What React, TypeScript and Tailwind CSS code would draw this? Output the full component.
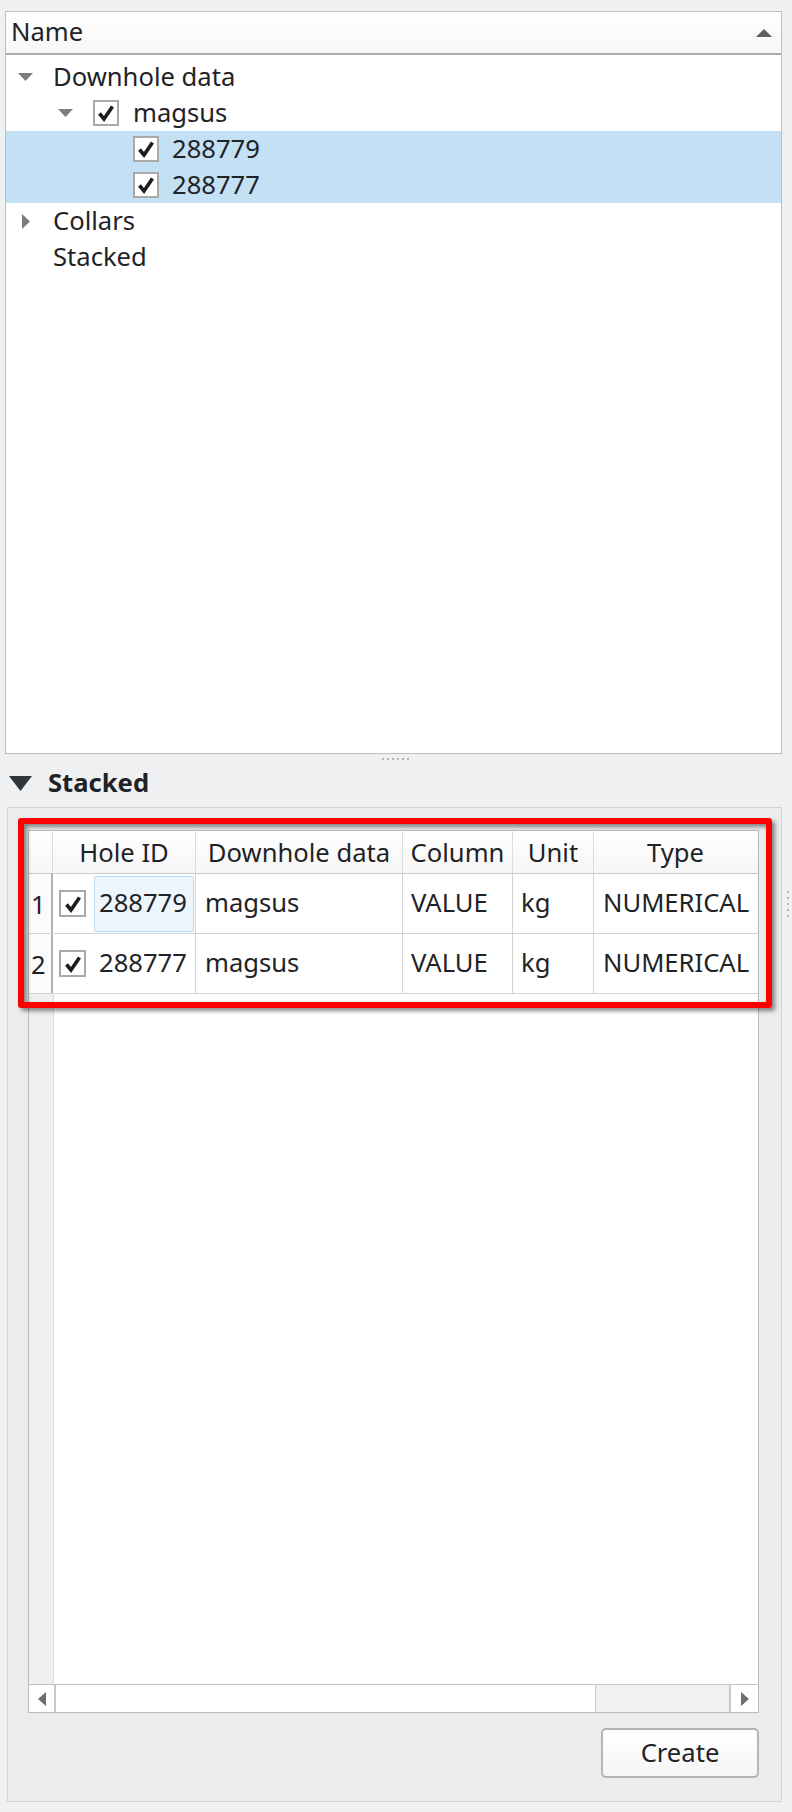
import React from "react";

const font = { fontFamily: '"Noto Sans", "Open Sans", sans-serif' };

function Check({ size = 26 }: { size?: number }) {
    return (
        <div className="flex items-center justify-center border-2 border-[#a9a9a9] bg-white shrink-0" style={{ width: size, height: size }}>
            <svg width="18" height="18" viewBox="0 0 18 18">
                <path d="M2.5 9.5 L7 15 L15.5 2.5" fill="none" stroke="#1b1e20" strokeWidth="3.6" strokeLinejoin="miter" />
            </svg>
        </div>
    );
}

function DownArrow({ color = "#7b7d7f", w = 15, h = 8 }: { color?: string; w?: number; h?: number }) {
    return (
        <svg width={w} height={h} viewBox={`0 0 ${w} ${h}`} className="shrink-0">
            <polygon points={`0,0 ${w},0 ${w / 2},${h}`} fill={color} />
        </svg>
    );
}

function RightArrow() {
    return (
        <svg width="8" height="15" viewBox="0 0 8 15" className="shrink-0">
            <polygon points="0,0 8,7.5 0,15" fill="#7b7d7f" />
        </svg>
    );
}

const cols = "grid grid-cols-[24px_143px_207px_110px_81px_163px]";

const rows = [
    { n: "1", id: "288779", focus: true },
    { n: "2", id: "288777", focus: false },
];

export default function App() {
    return (
        <div className="w-[792px] h-[1812px] bg-[#eff0f1] text-[#1f2326] text-[25.6px] flex flex-col" style={font}>
            {/* tree view */}
            <div className="mt-[11px] ml-[5px] w-[777px] h-[743px] border border-[#bcbebf] bg-white flex flex-col">
                <div className="h-[43px] shrink-0 flex items-center justify-between pl-[5px] pr-[9px] border-b-2 border-[#a9aaab] bg-gradient-to-b from-white to-[#f7f7f7]">
                    <span>Name</span>
                    <svg width="16" height="8" viewBox="0 0 16 8">
                        <polygon points="0,8 16,8 8,0" fill="#5d5f61" />
                    </svg>
                </div>
                <div className="pt-[4px] flex flex-col">
                    <div className="h-[36px] flex items-center">
                        <div className="ml-[12px]"><DownArrow /></div>
                        <span className="ml-[20px]">Downhole data</span>
                    </div>
                    <div className="h-[36px] flex items-center">
                        <div className="ml-[52px]"><DownArrow /></div>
                        <div className="ml-[20px]"><Check /></div>
                        <span className="ml-[14px]">magsus</span>
                    </div>
                    {["288779", "288777"].map((id) => (
                        <div key={id} className="h-[36px] flex items-center bg-[#c4e0f4]">
                            <div className="ml-[127px]"><Check /></div>
                            <span className="ml-[13px]">{id}</span>
                        </div>
                    ))}
                    <div className="h-[36px] flex items-center">
                        <div className="ml-[16px]"><RightArrow /></div>
                        <span className="ml-[23px]">Collars</span>
                    </div>
                    <div className="h-[36px] flex items-center">
                        <span className="ml-[47px]">Stacked</span>
                    </div>
                </div>
            </div>

            {/* splitter handle */}
            <div className="h-[9px] flex items-center justify-center gap-[3px] pr-[2px]">
                {[0, 1, 2, 3, 4, 5].map((i) => (
                    <div key={i} className="w-[2px] h-[2px] bg-[#b4b6b8]" />
                ))}
            </div>

            {/* section header */}
            <div className="h-[40px] flex items-center">
                <div className="ml-[9px]"><DownArrow color="#31363b" w={23} h={15} /></div>
                <span className="ml-[16px] font-bold">Stacked</span>
            </div>

            <div className="mt-[4px] flex">
                <div className="ml-[7px] w-[775px] h-[995px] border border-[#d3d4d5] bg-[#ebeced] pt-[22px] pl-[20px] flex flex-col">
                    <div className="relative w-[731px] h-[883px] border border-[#b9babb] bg-white flex flex-col">
                        {/* header */}
                        <div className={`${cols} h-[43px] shrink-0 border-b border-[#c9cacb] bg-gradient-to-b from-white to-[#f6f6f6]`}>
                            <div className="border-r border-[#dcdcdc]" />
                            <div className="border-r border-[#dcdcdc] flex items-center justify-center pt-[2px]">Hole ID</div>
                            <div className="border-r border-[#dcdcdc] flex items-center justify-center pt-[2px]">Downhole data</div>
                            <div className="border-r border-[#dcdcdc] flex items-center justify-center pt-[2px]">Column</div>
                            <div className="border-r border-[#dcdcdc] flex items-center justify-center pt-[2px]">Unit</div>
                            <div className="flex items-center justify-center pt-[2px]">Type</div>
                        </div>
                        {rows.map((r) => (
                            <div key={r.n} className={`${cols} h-[60px] shrink-0 border-b border-[#d4d4d4]`}>
                                <div className="border-r-2 border-[#b0b1b2] bg-[#fbfbfb] flex items-center pl-[2px] pt-[3px]">{r.n}</div>
                                <div className="border-r border-[#d4d4d4] flex items-center">
                                    <div className="ml-[6px]"><Check size={27} /></div>
                                    {r.focus ? (
                                        <div className="ml-[8px] w-[100px] h-[56px] border border-[#b9d7ef] bg-[#eef6fd] rounded-[2px] flex items-center pl-[4px]">{r.id}</div>
                                    ) : (
                                        <span className="ml-[13px]">{r.id}</span>
                                    )}
                                </div>
                                <div className="border-r border-[#d4d4d4] flex items-center pl-[9px]">magsus</div>
                                <div className="border-r border-[#d4d4d4] flex items-center pl-[8px]">VALUE</div>
                                <div className="border-r border-[#d4d4d4] flex items-center pl-[8px]">kg</div>
                                <div className="flex items-center pl-[9px]">NUMERICAL</div>
                            </div>
                        ))}
                        <div className="flex-1 flex">
                            <div className="w-[25px] bg-[#eeeff0] border-r border-[#dcdcdc]" />
                            <div className="flex-1 bg-white" />
                        </div>
                        {/* horizontal scrollbar */}
                        <div className="h-[28px] shrink-0 border-t border-[#c3c4c5] flex">
                            <div className="w-[27px] border-r-2 border-[#c8c9ca] flex items-center justify-center">
                                <svg width="8" height="14" viewBox="0 0 8 14"><polygon points="8,0 0,7 8,14" fill="#6b6d6f" /></svg>
                            </div>
                            <div className="flex-1 bg-white" />
                            <div className="w-[136px] bg-[#f1f1f1] border-l border-r-2 border-[#c8c9ca]" />
                            <div className="w-[27px] flex items-center justify-center">
                                <svg width="8" height="14" viewBox="0 0 8 14"><polygon points="0,0 8,7 0,14" fill="#6b6d6f" /></svg>
                            </div>
                        </div>
                        {/* red annotation frame */}
                        <div className="absolute left-[-11px] top-[-13px] w-[754px] h-[190px] border-[6px] border-[#ff0000] rounded-[3px] shadow-[3px_3px_4px_rgba(0,0,0,0.45),inset_3px_3px_4px_rgba(0,0,0,0.45)] pointer-events-none" />
                    </div>
                    <div className="w-[731px] mt-[15px] flex justify-end">
                        <button className="w-[158px] h-[50px] border-2 border-[#b3b4b5] rounded-[5px] bg-gradient-to-b from-white to-[#f5f5f5] text-[25.6px] text-[#1f2326]" style={font}>
                            Create
                        </button>
                    </div>
                </div>
                <div className="ml-[5px] pt-[84px] flex flex-col gap-[4px]">
                    {[0, 1, 2, 3, 4].map((i) => (
                        <div key={i} className="w-[2px] h-[2px] bg-[#b4b6b8]" />
                    ))}
                </div>
            </div>
        </div>
    );
}
